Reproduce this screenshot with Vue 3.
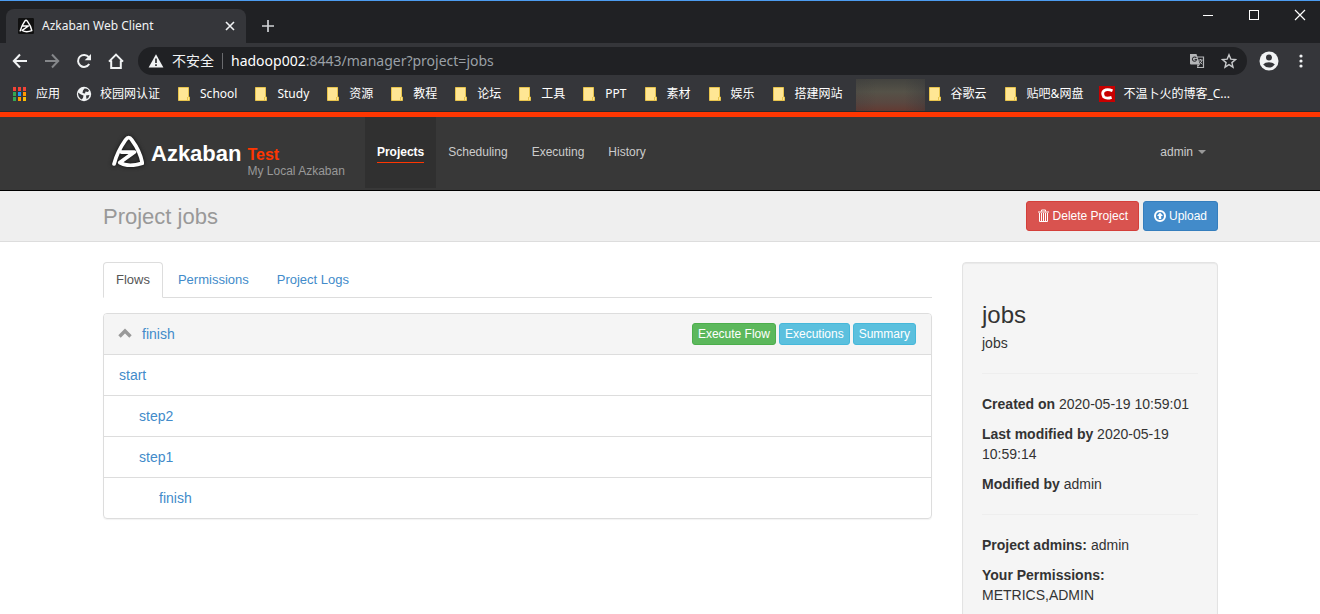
<script setup>
import { ref } from 'vue'

const address = ref('hadoop002:8443/manager?project=jobs')

const bookmarks = [
  { kind: 'apps', label: '应用' },
  { kind: 'globe', label: '校园网认证' },
  { kind: 'folder', label: 'School' },
  { kind: 'folder', label: 'Study' },
  { kind: 'folder', label: '资源' },
  { kind: 'folder', label: '教程' },
  { kind: 'folder', label: '论坛' },
  { kind: 'folder', label: '工具' },
  { kind: 'folder', label: 'PPT' },
  { kind: 'folder', label: '素材' },
  { kind: 'folder', label: '娱乐' },
  { kind: 'folder', label: '搭建网站' },
  { kind: 'hidden', label: '' },
  { kind: 'folder', label: '谷歌云' },
  { kind: 'folder', label: '贴吧&网盘' },
  { kind: 'csdn', label: '不温卜火的博客_C...' }
]

const appColors = ['#f44336', '#f44336', '#f44336', '#34a853', '#2196f3', '#ff9800', '#34a853', '#ff9800', '#fbbc05']

const navLinks = ['Projects', 'Scheduling', 'Executing', 'History']
const tabs = ['Flows', 'Permissions', 'Project Logs']
const jobs = [
  { name: 'start', level: 0 },
  { name: 'step2', level: 1 },
  { name: 'step1', level: 1 },
  { name: 'finish', level: 2 }
]
</script>

<template>
  <div class="window">
    <header class="browser">
      <div class="tabstrip">
        <div class="tab">
          <svg class="favicon" viewBox="0 0 132 132" width="16" height="16">
            <rect width="132" height="132" rx="10" fill="#111" />
            <path d="M18 106C26 78 42 46 56 26Q66 12 77 26C92 46 108 76 114 104C88 114 56 116 34 102L86 66H42" fill="none" stroke="#fff" stroke-width="12" stroke-linecap="round" stroke-linejoin="round" />
          </svg>
          <span class="tab-title">Azkaban Web Client</span>
          <button class="plain" aria-label="Close tab">
            <svg viewBox="0 0 10 10" width="10" height="10"><path d="M1 1l8 8M9 1L1 9" stroke="#f1f3f4" stroke-width="1.6" /></svg>
          </button>
        </div>
        <button class="plain new-tab" aria-label="New tab">
          <svg viewBox="0 0 12 12" width="12" height="12"><path d="M6 0v12M0 6h12" stroke="#d0d2d5" stroke-width="1.7" /></svg>
        </button>
        <div class="window-controls">
          <button class="plain" aria-label="Minimize">
            <svg viewBox="0 0 12 12" width="12" height="12"><path d="M1 6.5h10" stroke="#fff" /></svg>
          </button>
          <button class="plain" aria-label="Maximize">
            <svg viewBox="0 0 12 12" width="12" height="12"><rect x="1.5" y="1.5" width="9" height="9" fill="none" stroke="#fff" /></svg>
          </button>
          <button class="plain" aria-label="Close">
            <svg viewBox="0 0 12 12" width="12" height="12"><path d="M1 1l10 10M11 1L1 11" stroke="#fff" stroke-width="1.2" /></svg>
          </button>
        </div>
      </div>

      <div class="toolbar">
        <div class="nav-buttons">
          <button class="plain" aria-label="Back">
            <svg viewBox="0 0 16 16" width="16" height="16"><path d="M15 8H2M8 1.5L1.8 8L8 14.5" fill="none" stroke="#f1f3f4" stroke-width="2" /></svg>
          </button>
          <button class="plain" aria-label="Forward">
            <svg viewBox="0 0 16 16" width="16" height="16"><path d="M1 8h13M8 1.5L14.2 8L8 14.5" fill="none" stroke="#85878a" stroke-width="2" /></svg>
          </button>
          <button class="plain" aria-label="Reload">
            <svg viewBox="0 0 16 16" width="16" height="16"><path d="M13.2 11A6 6 0 1 1 12.8 4.2" fill="none" stroke="#f1f3f4" stroke-width="2" /><path d="M15 1v6.3H8.7z" fill="#f1f3f4" /></svg>
          </button>
          <button class="plain" aria-label="Home">
            <svg viewBox="0 0 16 16" width="16" height="16"><path d="M1 8.6L8 1.6L15 8.6M3.2 7.5V15H12.8V7.5" fill="none" stroke="#f1f3f4" stroke-width="2" /></svg>
          </button>
        </div>
        <div class="omnibox">
          <svg viewBox="0 0 16 16" width="16" height="16"><path d="M8 1.2L15.4 14.4H.6z" fill="#f1f3f4" /><path d="M8 5.5v4.4M8 11.2v1.8" stroke="#202124" stroke-width="1.6" /></svg>
          <span class="insecure">不安全</span>
          <label class="address">
            <span class="url" aria-hidden="true"><span class="host">hadoop002</span>:8443/manager?project=jobs</span>
            <input v-model="address" type="text" aria-label="Address" />
          </label>
          <button class="plain" aria-label="Translate">
            <svg viewBox="0 0 16 16" width="16" height="16">
              <path d="M7 4h7.5v10.5H8" fill="none" stroke="#b4b6b8" stroke-width="1.2" />
              <path d="M1 1h6.5l3.5 10.5H2Q1 11.5 1 10.5z" fill="#b4b6b8" />
              <path d="M8 11.5h3L8.5 14.5z" fill="#b4b6b8" />
              <path d="M7.3 5A2.1 2.1 0 1 0 7.6 6.5H5.6" fill="none" stroke="#303134" stroke-width="1.1" />
              <path d="M9.5 7h4M11.5 6v1M13 7Q12.5 9.5 10.3 11M10.6 8.5l2.6 2.8" fill="none" stroke="#b4b6b8" />
            </svg>
          </button>
          <button class="plain" aria-label="Bookmark this page">
            <svg viewBox="0 0 16 16" width="16" height="16"><path d="M8 1.8L9.8 6.1L14.5 6.5L10.9 9.6L12 14.2L8 11.7L4 14.2L5.1 9.6L1.5 6.5L6.2 6.1z" fill="none" stroke="#c8cacc" stroke-width="1.4" /></svg>
          </button>
        </div>
        <div class="browser-menu">
          <button class="plain" aria-label="Profile">
            <svg viewBox="0 0 20 20" width="20" height="20"><circle cx="10" cy="10" r="9.5" fill="#f1f3f4" /><circle cx="10" cy="6.6" r="3" fill="#35363a" /><path d="M4.2 13.6Q6 11.2 10 11.2T15.8 13.6Q13.5 16.6 10 16.6T4.2 13.6z" fill="#35363a" /></svg>
          </button>
          <button class="plain" aria-label="Menu">
            <svg viewBox="0 0 16 16" width="16" height="16" fill="#f1f3f4"><circle cx="8" cy="3" r="1.6" /><circle cx="8" cy="8" r="1.6" /><circle cx="8" cy="13" r="1.6" /></svg>
          </button>
        </div>
      </div>

      <nav class="bookmarks" aria-label="Bookmarks">
        <template v-for="item in bookmarks" :key="item.label">
          <span v-if="item.kind === 'hidden'" class="redacted"></span>
          <a v-else href="#" class="bookmark">
            <svg v-if="item.kind === 'apps'" viewBox="0 0 16 16" width="16" height="16">
              <rect v-for="(color, i) in appColors" :key="i" :x="1 + (i % 3) * 5" :y="1 + Math.floor(i / 3) * 5" width="3" height="4" :fill="color" />
            </svg>
            <svg v-else-if="item.kind === 'globe'" viewBox="0 0 16 16" width="16" height="16">
              <circle cx="8" cy="8" r="7.2" fill="#f1f3f4" />
              <path d="M8.5 2.5Q11.5 2 13 4.500L12 6L9.500 5.500L9 7.500L6.500 7L7 4.500z M2 6.500L5 8.500L7.500 9.500L7 12L5.500 13.500Q2 11.500 2 6.500z M10 9.500L13.500 9Q13 12 10.500 13z" fill="#35363a" />
            </svg>
            <svg v-else-if="item.kind === 'folder'" viewBox="0 0 16 16" width="16" height="16">
              <path d="M2.5 1.500h10v9.500h1v3.500h-11z" fill="#ffe694" stroke="#e8c44c" />
              <path d="M11.5 11v3.500" stroke="#e8c44c" />
            </svg>
            <svg v-else viewBox="0 0 16 16" width="16" height="16">
              <rect width="16" height="16" fill="#c90000" />
              <path d="M13.5 4.700Q8 2.500 5.200 4.700T4.800 11Q7.500 13 12.600 11.300" fill="none" stroke="#fff" stroke-width="2.8" />
            </svg>
            <span>{{ item.label }}</span>
          </a>
        </template>
      </nav>
    </header>

    <div class="page">
      <nav class="navbar" aria-label="Main">
        <div class="container navbar-row">
          <a href="#" class="brand">
            <svg class="logo" viewBox="18 18 94 94" width="32" height="32">
              <path d="M24 103C30 80 44 52 58 32Q67 20 76 32C91 52 103 76 107 101C84 108 58 110 41 99L84 68H46" fill="none" stroke="#fff" stroke-width="11" stroke-linecap="round" stroke-linejoin="round" />
            </svg>
            <span class="brand-name">Azkaban</span>
          </a>
          <div class="instance">
            <span class="instance-name">Test</span>
            <span class="instance-label">My Local Azkaban</span>
          </div>
          <ul class="nav-list">
            <li v-for="(link, i) in navLinks" :key="link" :class="{ active: i === 0 }">
              <a href="#"><span>{{ link }}</span></a>
            </li>
          </ul>
          <button class="plain user">admin <span class="caret"></span></button>
        </div>
      </nav>

      <div class="page-header">
        <div class="container header-row">
          <h1>Project jobs</h1>
          <div class="actions">
            <button class="btn danger">
              <svg viewBox="0 0 13 14" width="13" height="14"><path d="M1 3h11M4.5 2.5V1h4v1.500M2.500 4V12.500h8V4M4.500 4v8M6.500 4v8M8.500 4v8" fill="none" stroke="#fff" /></svg>
              Delete Project
            </button>
            <button class="btn primary">
              <svg viewBox="0 0 12 12" width="12" height="12"><circle cx="6" cy="6" r="5" fill="none" stroke="#fff" stroke-width="2" /><path d="M6 2.500L9 6H7.200V9H4.800V6H3z" fill="#fff" /></svg>
              Upload
            </button>
          </div>
        </div>
      </div>

      <div class="container content">
        <main>
          <ul class="tabs">
            <li v-for="(tab, i) in tabs" :key="tab"><a href="#" :class="{ active: i === 0 }">{{ tab }}</a></li>
          </ul>
          <section class="panel">
            <div class="panel-heading">
              <svg viewBox="0 0 14 14" width="14" height="14"><path d="M1.5 9.500L7 4L12.500 9.500" fill="none" stroke="#999" stroke-width="3.4" /></svg>
              <a href="#">finish</a>
              <div class="flow-actions">
                <button class="btn mini success">Execute Flow</button>
                <button class="btn mini info">Executions</button>
                <button class="btn mini info">Summary</button>
              </div>
            </div>
            <ul class="job-list">
              <li v-for="job in jobs" :key="job.name + job.level" :class="'level-' + job.level"><a href="#">{{ job.name }}</a></li>
            </ul>
          </section>
        </main>
        <aside class="well">
          <h2>jobs</h2>
          <p>jobs</p>
          <hr />
          <p><strong>Created on</strong> 2020-05-19 10:59:01</p>
          <p><strong>Last modified by</strong> 2020-05-19 10:59:14</p>
          <p><strong>Modified by</strong> admin</p>
          <hr />
          <p><strong>Project admins:</strong> admin</p>
          <p><strong>Your Permissions:</strong> METRICS,ADMIN</p>
        </aside>
      </div>
    </div>
  </div>
</template>

<style>
body {
  background: #fff;
}
</style>

<style scoped>
* {
  box-sizing: border-box;
}

.window {
  display: flex;
  flex-direction: column;
  height: 100vh;
  overflow: hidden;
  font: 14px/20px "Liberation Sans", "Noto Sans CJK SC", sans-serif;
  color: #333;
}

a {
  color: #428bca;
  text-decoration: none;
}

svg {
  display: block;
  flex: none;
}

ul {
  list-style: none;
  margin: 0;
  padding: 0;
}

.plain {
  display: flex;
  align-items: center;
  justify-content: center;
  border: 0;
  padding: 0;
  background: none;
  color: inherit;
  font: inherit;
}

/* Browser frame */
.browser {
  flex: none;
  background: #35363a;
  border-top: 1px solid #4c9cf0;
  border-bottom: 1px solid #292a2d;
  color: #f1f3f4;
  font-family: "Noto Sans", "Noto Sans CJK SC", sans-serif;
}

.tabstrip {
  display: flex;
  align-items: flex-end;
  height: 42px;
  padding-left: 6px;
  background: #202124;
}

.tab {
  display: flex;
  align-items: center;
  gap: 8px;
  width: 240px;
  height: 34px;
  padding: 0 11px 0 12px;
  border-radius: 8px 8px 0 0;
  background: #35363a;
  font-size: 12px;
}

.tab-title {
  flex: 1;
  white-space: nowrap;
}

.new-tab {
  width: 44px;
  height: 34px;
}

.window-controls {
  display: flex;
  align-self: flex-start;
  margin-left: auto;
}

.window-controls .plain {
  width: 46px;
  height: 28px;
}

.window-controls .plain:last-child {
  width: 43px;
  padding-left: 3px;
}

.toolbar {
  display: flex;
  align-items: center;
  gap: 12px;
  height: 36px;
  padding: 0 11px 0 12px;
}

.nav-buttons {
  display: flex;
  gap: 16px;
  margin-right: 2px;
}

.browser-menu {
  display: flex;
  align-items: center;
  gap: 14px;
}

.omnibox {
  display: flex;
  flex: 1;
  align-items: center;
  gap: 8px;
  height: 28px;
  padding: 0 10px;
  border-radius: 14px;
  background: #202124;
  font-size: 14px;
}

.omnibox .plain {
  margin-left: 8px;
}

.address {
  position: relative;
  flex: 1;
  margin-right: 8px;
  padding-left: 8px;
  border-left: 1px solid #6a6b6e;
  height: 16px;
  line-height: 16px;
}

.url {
  color: #9aa0a6;
  white-space: nowrap;
}

.host {
  color: #fff;
}

.address input {
  position: absolute;
  inset: 0;
  width: 100%;
  border: 0;
  padding: 0 0 0 8px;
  background: none;
  color: transparent;
  font: inherit;
  outline: 0;
}

.insecure {
  white-space: nowrap;
}

.bookmarks {
  display: flex;
  align-items: stretch;
  height: 32px;
  padding-left: 4px;
  overflow: hidden;
  font-size: 12px;
}

.bookmark {
  display: flex;
  flex: none;
  align-items: center;
  gap: 8px;
  padding: 0 8px 3px;
  color: #fff;
}

.redacted {
  flex: none;
  width: 69px;
  margin: 0 -6px 0 5px;
  background: linear-gradient(90deg, #35363a33, transparent 30%, transparent 70%, #35363a66), linear-gradient(#43433f, #555248 40%, #5a4740 75%, #633a32);
}

/* Application header */
.page {
  flex: 1;
  min-height: 0;
  overflow: hidden;
}

.container {
  max-width: 1144px;
  margin: 0 auto;
  padding: 0 14px 0 15px;
}

.navbar {
  border-top: 5px solid #ff3601;
  border-bottom: 1px solid #000;
  background: #383838;
  font-size: 12px;
}

.navbar-row {
  display: flex;
  height: 73px;
}

.brand {
  display: flex;
  align-items: center;
  gap: 7px;
  padding: 0 6px 6px 9px;
  color: #fff;
  font-size: 22px;
  font-weight: bold;
}

.logo {
  filter: drop-shadow(0 0 2px #111);
}

.brand-name {
  padding-top: 6px;
}

.instance {
  display: flex;
  flex-direction: column;
  padding: 30px 20px 0 0;
}

.instance-name {
  color: #ff3601;
  font-size: 16px;
  font-weight: bold;
  line-height: 16px;
}

.instance-label {
  color: #999;
  line-height: 16px;
}

.nav-list {
  display: flex;
}

.nav-list a {
  display: block;
  height: 71px;
  padding: 27px 12px 0;
  color: #ccc;
  line-height: 16px;
}

.nav-list span {
  display: block;
  padding-bottom: 2px;
}

.nav-list .active a {
  background: #303030;
  color: #fff;
  font-weight: bold;
}

.active span {
  border-bottom: 1px solid #ff3601;
}

.user {
  gap: 5px;
  height: 70px;
  margin-left: auto;
  padding-right: 12px;
  color: #ccc;
}

.caret {
  border: 4px solid transparent;
  border-top-color: #999;
  border-bottom: 0;
}

.page-header {
  border-bottom: 1px solid #ddd;
  background: #efefef;
}

.header-row {
  display: flex;
  align-items: center;
  justify-content: space-between;
  height: 50px;
}

h1 {
  margin: 0;
  padding-top: 2px;
  color: #999;
  font-size: 22px;
  font-weight: normal;
  line-height: 24px;
}

.actions {
  display: flex;
  gap: 4px;
}

.btn {
  display: flex;
  align-items: center;
  gap: 3px;
  height: 30px;
  padding: 0 10px;
  border: 1px solid;
  border-radius: 3px;
  color: #fff;
  font: 12px/18px "Liberation Sans", sans-serif;
}

.danger {
  border-color: #d43f3a;
  background: #d9534f;
}

.primary {
  border-color: #357ebd;
  background: #428bca;
}

.success {
  border-color: #4cae4c;
  background: #5cb85c;
}

.info {
  border-color: #46b8da;
  background: #5bc0de;
}

.mini {
  height: 22px;
  padding: 0 5px;
}

/* Project content */
.content {
  display: flex;
  align-items: flex-start;
  gap: 30px;
  padding-top: 20px;
}

main {
  flex: 1;
}

.tabs {
  display: flex;
  gap: 2px;
  margin-bottom: 15px;
  border-bottom: 1px solid #ddd;
  font-size: 13px;
}

.tabs a {
  display: block;
  margin-bottom: -1px;
  padding: 7px 12px;
  border: 1px solid transparent;
  border-radius: 4px 4px 0 0;
}

.tabs .active {
  border-color: #ddd #ddd #fff;
  background: #fff;
  color: #555;
}

.panel {
  border: 1px solid #ddd;
  border-radius: 4px;
  box-shadow: 0 1px 1px rgba(0, 0, 0, 0.05);
}

.panel-heading {
  display: flex;
  align-items: center;
  gap: 10px;
  height: 40px;
  padding: 0 15px 0 14px;
  border-radius: 3px 3px 0 0;
  background: #f5f5f5;
}

.flow-actions {
  display: flex;
  gap: 3px;
  margin-left: auto;
}

.job-list li {
  padding: 10px 15px;
  border-top: 1px solid #ddd;
}

.job-list .level-1 {
  padding-left: 35px;
}

.job-list .level-2 {
  padding-left: 55px;
}

.well {
  width: 256px;
  padding: 19px;
  border: 1px solid #e3e3e3;
  border-radius: 4px;
  background: #f5f5f5;
  box-shadow: inset 0 1px 1px rgba(0, 0, 0, 0.05);
}

h2 {
  margin: 20px 0 5px;
  font-size: 24px;
  font-weight: normal;
  line-height: 26px;
}

p {
  margin: 0 0 10px;
}

hr {
  margin: 20px 0;
  border: 0;
  border-top: 1px solid #eee;
}
</style>
